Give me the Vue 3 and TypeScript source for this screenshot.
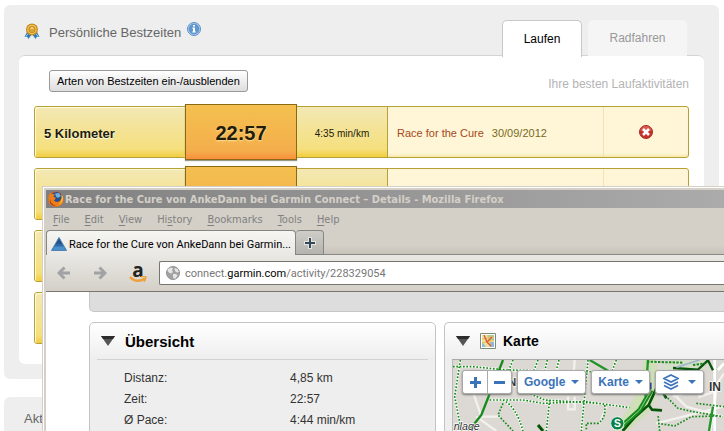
<script setup lang="ts">
interface BestTime {
  name: string
  time: string
  pace: string
  activity: string
  date: string
}

const records: BestTime[] = [
  { name: '5 Kilometer', time: '22:57', pace: '4:35 min/km', activity: 'Race for the Cure', date: '30/09/2012' },
  { name: '', time: '', pace: '', activity: '', date: '' },
  { name: '', time: '', pace: '', activity: '', date: '' },
  { name: '', time: '', pace: '', activity: '', date: '' },
]

const menu: [string, string, string][] = [
  ['', 'F', 'ile'],
  ['', 'E', 'dit'],
  ['', 'V', 'iew'],
  ['Hi', 's', 'tory'],
  ['', 'B', 'ookmarks'],
  ['', 'T', 'ools'],
  ['', 'H', 'elp'],
]

const summary: [string, string][] = [
  ['Distanz:', '4,85 km'],
  ['Zeit:', '22:57'],
  ['Ø Pace:', '4:44 min/km'],
]
</script>

<template>
  <div class="desktop">
    <main class="page">
      <section class="panel">
        <header class="panel-head">
          <svg class="medal" viewBox="0 0 16 17" aria-hidden="true">
            <path d="M3 9L.5 14l2.500-.5L4.500 16 8 11z" fill="#2f7cb8" />
            <path d="M13 9l2.500 5-2.500-.5L11.500 16 8 11z" fill="#2f7cb8" />
            <path d="M2 13l2-2M14 13l-2-2" stroke="#8fc4e6" />
            <circle cx="8" cy="6.500" r="6" fill="#c98b1f" />
            <circle cx="8" cy="6.500" r="4.700" fill="#f0c65a" />
            <circle cx="8" cy="6.500" r="3.200" fill="#dda536" stroke="#b97b18" stroke-width=".7" />
            <path d="M6.500 5.500a2 2 0 0 1 3 0" stroke="#fff1b0" fill="none" />
          </svg>
          <h2>Persönliche Bestzeiten</h2>
          <svg class="info" viewBox="0 0 14 14" aria-hidden="true">
            <circle cx="7" cy="7" r="6.500" fill="#b9d3ec" stroke="#5d8fc4" />
            <circle cx="7" cy="7" r="5.400" fill="#6097cf" />
            <path d="M6 3h2v1.500H6zM5.300 5.500H8v4h.9v1H5.200v-1H6v-3h-.7z" fill="#fff" />
          </svg>
          <nav class="tabs">
            <button class="tab active" type="button">Laufen</button>
            <button class="tab" type="button">Radfahren</button>
          </nav>
        </header>
        <div class="panel-body">
          <div class="tools">
            <button class="toggle" type="button">Arten von Bestzeiten ein-/ausblenden</button>
            <span class="hint">Ihre besten Laufaktivitäten</span>
          </div>
          <ul class="records">
            <li v-for="(r, i) in records" :key="i" class="record">
              <strong class="name">{{ r.name }}</strong>
              <span class="time">{{ r.time }}</span>
              <span class="pace">{{ r.pace }}</span>
              <span class="activity">
                <a v-if="r.activity" href="#">{{ r.activity }}</a>
                <span>{{ r.date }}</span>
              </span>
              <span class="remove">
                <button v-if="r.name" type="button" aria-label="Entfernen">
                  <svg viewBox="0 0 14 14" aria-hidden="true">
                    <circle cx="7" cy="7" r="6.500" fill="#c5312b" stroke="#a82a25" />
                    <path d="M1.500 6a5.500 5 0 0 1 11 0z" fill="#d65a50" />
                    <path d="M4 4l6 6M10 4l-6 6" stroke="#fff" stroke-width="2.600" />
                  </svg>
                </button>
              </span>
            </li>
          </ul>
        </div>
      </section>
      <section class="panel next">
        <h2>Aktivitäten</h2>
      </section>
    </main>

    <div class="window">
      <div class="titlebar">
        <svg viewBox="0 0 16 16" aria-hidden="true">
          <circle cx="8" cy="8" r="7.500" fill="#d9541a" />
          <circle cx="8.500" cy="6.500" r="5.500" fill="#244f8e" />
          <path d="M7 2.500l4-.5 2 3-3 2-2-1.500z" fill="#6eb0e4" />
          <path d="M1 4L2.500 1.500 4 3l3 .5-1.500 2L8 7 6 9.500c1.500 2 5 2 6.500-.5 1-2 1-3.500.5-6 3 3 3.500 7 1 10s-8 3.500-11 1S0 7 1 4z" fill="#ed7d18" />
          <path d="M14 4c2 4 0 9-4 10 3-2 4-5 4-10z" fill="#f8d24a" />
          <path d="M2 8c.5 4 3 6 6 6.500-4 1-7-2-6-6.500z" fill="#b83310" />
        </svg>
        <span>Race for the Cure von AnkeDann bei Garmin Connect – Details - Mozilla Firefox</span>
      </div>
      <nav class="menubar">
        <button v-for="m in menu" :key="m.join('')" type="button">{{ m[0] }}<u>{{ m[1] }}</u>{{ m[2] }}</button>
      </nav>
      <div class="tabstrip">
        <button class="browser-tab" type="button">
          <svg viewBox="0 0 16 14" aria-hidden="true">
            <path d="M8 .5L15.500 13.500H.5z" fill="#2d69a8" stroke="#4f83b8" />
            <path d="M8 1.500L11 7H5z" fill="#235284" />
            <path d="M3.500 9.500h9l2 3.500h-13z" fill="#4b8fca" />
          </svg>
          <span>Race for the Cure von AnkeDann bei Garmin...</span>
        </button>
        <button class="new-tab" type="button" aria-label="Neuer Tab">
          <svg viewBox="0 0 12 12" aria-hidden="true">
            <path d="M6 0v12M0 6h12" stroke="#e4e4e2" stroke-width="4" />
            <path d="M6 1v10M1 6h10" stroke="#344a59" stroke-width="2" />
          </svg>
        </button>
      </div>
      <div class="navbar">
        <button type="button" aria-label="Zurück">
          <svg viewBox="0 0 14 14" aria-hidden="true">
            <path d="M7.500 1.500L2 7l5.500 5.500M2.500 7H13" fill="none" stroke="#a0a2a4" stroke-width="3" />
          </svg>
        </button>
        <button type="button" aria-label="Vor">
          <svg viewBox="0 0 14 14" aria-hidden="true">
            <path d="M6.500 1.500L12 7l-5.500 5.500M11.500 7H1" fill="none" stroke="#a0a2a4" stroke-width="3" />
          </svg>
        </button>
        <button class="amazon" type="button" aria-label="Amazon">
          <b>a</b>
          <svg viewBox="0 0 18 7" aria-hidden="true">
            <path d="M1 1c4 4.500 10 5 15 1.500" fill="none" stroke="#eea13a" stroke-width="2.400" />
            <path d="M12 .8c3-.8 4.500-.5 4.700 0S16.500 4 15 5.500" fill="none" stroke="#eea13a" stroke-width="1.600" />
          </svg>
        </button>
        <div class="address" role="group" aria-label="Adresse">
          <svg viewBox="0 0 14 14" aria-hidden="true">
            <circle cx="7" cy="7" r="6.500" fill="#a2a2a2" stroke="#929292" />
            <path d="M2 3l3-1.500 2 1-1 2 1 1.500-2 1.500L3.500 7 1.500 5zM8.500 2l3 1 1.500 3-2 .5-2-1.500zM7 8l3 0 1.500 1.500-2 3-2 0-.5-2z" fill="#e6e6e6" />
          </svg>
          <a href="#">connect.<b>garmin.com</b>/activity/228329054</a>
        </div>
      </div>

      <div class="content">
        <div class="banner"></div>
        <div class="columns">
          <section class="card">
            <h3>
              <svg class="arrow" viewBox="0 0 14 10" aria-hidden="true">
                <path d="M0 0h14L7 10z" fill="#555" />
                <path d="M0 0h14l-2 3H2z" fill="#2c2c2c" />
              </svg>
              <span class="big">Übersicht</span>
            </h3>
            <table>
              <tbody>
                <tr v-for="s in summary" :key="s[0]">
                  <th scope="row">{{ s[0] }}</th>
                  <td>{{ s[1] }}</td>
                </tr>
              </tbody>
            </table>
          </section>
          <section class="card map-card">
            <h3>
              <svg class="arrow" viewBox="0 0 14 10" aria-hidden="true">
                <path d="M0 0h14L7 10z" fill="#555" />
                <path d="M0 0h14l-2 3H2z" fill="#2c2c2c" />
              </svg>
              <svg class="map-icon" viewBox="0 0 16 16" aria-hidden="true">
                <path d="M.5.5h15v15H.5z" fill="#fff" stroke="#7c8a78" />
                <path d="M2 2h12v12H2z" fill="#e9e29a" />
                <path d="M7 2h7v5H9z" fill="#a8cf9b" />
                <path d="M2 9l4 5H2zM10 9h4v5h-4z" fill="#8fb7df" />
                <path d="M2 6l12-2M2 10l12-3M10 2v12" stroke="#f1b95c" />
                <path d="M4 2l3 7 4 4M7 9l5-5" fill="none" stroke="#dc5a35" stroke-width="1.400" />
              </svg>
              <span>Karte</span>
            </h3>
            <div class="map">
              <svg class="tiles" viewBox="40 150 813 213" preserveAspectRatio="xMinYMin slice" role="img" aria-label="Karte">
                <path d="M40 150h2000v600H40z" fill="#dcd8d3" />
                <path d="M612 150h38l10 60-15 60-20 40-60 53h-40l70-120z" fill="#cfe0b8" />
                <path d="M690 150h110l-5 30-90 20-50-10z" fill="#d5dfc8" />
                <g fill="none" stroke="#f3f1ed" stroke-width="7">
                  <path d="M88 180l10 60 27 80h55M405 150l-5 70M385 260v38h20v-38M500 290l-20 50M680 230l60 60 110 30M853 190l-20 30-20 143M700 260l70-20M650 340l200-50M760 200l20 60 60-20M110 320l60 43" />
                </g>
                <path d="M825 150v213M835 180l18-20" stroke="#fff" stroke-width="8" />
                <g fill="none" stroke="#fff" stroke-width="7">
                  <path d="M62 150L45 260l20 103M40 170h60l100 10 380 8M150 270h100l60 10 130-5 130 18M245 240l70 30 160 10M220 150l-25 60M295 150l-15 40M323 150l-8 35M358 150l-9 35M445 150l-20 213M530 150l-15 40M190 270q40 20 60 93M330 270l-10 93" />
                </g>
                <g fill="none" stroke="#158a18" stroke-width="5" stroke-dasharray="5 5">
                  <path d="M62 150L45 260l20 103M40 170h60l100 10 380 8M150 270h100l60 10 130-5 130 18M245 240l70 30 160 10M220 150l-25 60M295 150l-15 40M323 150l-8 35M358 150l-9 35M445 150l-20 213M530 150l-15 40M190 280l-15 35 45 48M190 270q40 20 60 93M330 270l-10 93M495 285q5 40-20 55h-35v23M670 250l45 45 45 10 90 15M770 280l83 10M655 340l50 8 50-28 80-2M660 363l-5-50" />
                </g>
                <path d="M190 150l-65 165-38 48" fill="none" stroke="#178b1b" stroke-width="7" />
                <path d="M450 150l55 32M625 150l-8 110M820 290l-12 73" fill="none" stroke="#23942a" stroke-width="7" />
                <path d="M700 174l75 5 30-28 15 30" fill="none" stroke="#07540d" stroke-width="7" />
                <path d="M622 155l110 3M760 165l35-5" stroke="#178b1b" stroke-width="6" stroke-dasharray="7 4" />
                <path d="M780 150l-70 22" stroke="#9db6ca" stroke-width="5" />
                <path d="M650 235l-23 50-40 35-38 43M650 240l18 5 12 20M627 285l10 14 30 2" fill="none" stroke="#06550b" stroke-width="8" />
                <path d="M635 240l-35 60-50 45" fill="none" stroke="#178b1b" stroke-width="14" />
                <path d="M635 240l-35 60-50 45" fill="none" stroke="#8fd08c" stroke-width="3" />
                <path d="M295 345l15 18" stroke="#050" stroke-width="9" />
                <path d="M633 218v20" stroke="#1b278c" stroke-width="5" />
                <circle cx="533" cy="340" r="20" fill="#088247" stroke="#e8f4ea" stroke-width="3" />
                <g font-family="Liberation Sans, sans-serif" fill="#333" stroke="#fff" stroke-width="4" paint-order="stroke">
                  <text x="206" y="227" font-size="33" font-weight="bold">N</text>
                  <text x="808" y="244" font-size="36" font-weight="bold">IN</text>
                  <text x="42" y="361" font-size="32" font-style="italic">nlage</text>
                </g>
                <text x="523" y="351" font-family="Liberation Sans, sans-serif" font-size="31" font-weight="bold" fill="#fff">S</text>
              </svg>
              <div class="controls">
                <div class="zoom">
                  <button type="button" aria-label="Vergrößern">
                    <svg viewBox="0 0 11 11"><path d="M5.500 0v11M0 5.500h11" stroke="#3b73b9" stroke-width="3" /></svg>
                  </button>
                  <button type="button" aria-label="Verkleinern">
                    <svg viewBox="0 0 11 11"><path d="M0 5.500h11" stroke="#3b73b9" stroke-width="3" /></svg>
                  </button>
                </div>
                <button class="drop" type="button">Google<i></i></button>
                <button class="drop" type="button">Karte<i></i></button>
                <button class="drop" type="button" aria-label="Ebenen">
                  <svg viewBox="0 0 16 16">
                    <path d="M8 1l7 3.500L8 8 1 4.500zM1 8l7 3.500L15 8M1 11.500L8 15l7-3.500" fill="none" stroke="#3b73b9" stroke-width="1.600" />
                  </svg>
                  <i></i>
                </button>
              </div>
            </div>
          </section>
        </div>
      </div>
    </div>
  </div>
</template>

<style>
body {
  background: #fff;
}
</style>

<style scoped>
* {
  box-sizing: border-box;
}
button {
  margin: 0;
  padding: 0;
  border: 0;
  background: none;
  font: inherit;
  color: inherit;
}
svg {
  display: block;
  flex: none;
}
h2, h3, ul {
  margin: 0;
  padding: 0;
  font-weight: normal;
}
a {
  color: inherit;
  text-decoration: none;
}
.desktop {
  position: relative;
  height: 100vh;
  overflow: hidden;
  font-family: "Liberation Sans", Arial, sans-serif;
  font-size: 12px;
}
.page {
  display: flex;
  flex-direction: column;
  gap: 18px;
  padding: 5px 5px 0 4px;
}
.panel {
  padding: 15px 15px;
  border-radius: 6px;
  background: #eee;
}
.panel-head {
  display: flex;
  align-items: flex-start;
  height: 36px;
  padding-left: 5px;
}
h2 {
  font-size: 13px;
  line-height: 16px;
  color: #666;
}
.panel-head h2 {
  margin: 5px 6px 0 9px;
}
.medal {
  width: 16px;
  height: 17px;
  margin-top: 3px;
}
.info {
  width: 14px;
  height: 14px;
  margin-top: 2px;
}
.tabs {
  display: flex;
  gap: 6px;
  margin-left: auto;
  padding-right: 17px;
}
.tab {
  height: 36px;
  width: 99px;
  border-radius: 5px 5px 0 0;
  background: #f5f5f5;
  color: #999;
}
.tab.active {
  height: 37px;
  width: 80px;
  border: 1px solid #c8c8c8;
  border-bottom: 0;
  background: #fff;
  color: #000;
  z-index: 1;
}
.panel-body {
  margin-top: -1px;
  padding: 14px 15px 20px;
  border-top: 1px solid #d4d4d4;
  border-radius: 6px;
  background: #fff;
}
.tools {
  display: flex;
  justify-content: space-between;
  align-items: flex-start;
  padding-left: 15px;
}
.toggle {
  height: 22px;
  padding: 0 7px;
  border: 1px solid #999;
  border-radius: 3px;
  background: linear-gradient(#fff, #ddd);
  font-size: 11px;
}
.hint {
  padding-top: 6px;
  line-height: 16px;
  color: #b4b4b4;
}
.records {
  display: grid;
  gap: 10px;
  margin-top: 14px;
  list-style: none;
}
.record {
  display: grid;
  grid-template-columns: 150px 112px 91px 1fr 84px;
  height: 52px;
  border: 1px solid #b7a136;
  border-radius: 3px;
  background: #fff6d8;
  box-shadow: inset 0 -3px 3px -1px #f7e7a8;
}
.record > * {
  display: flex;
  align-items: center;
}
.name, .pace {
  background: linear-gradient(#f3e8b4, #f5df7c 85%, #f2cd3e);
  color: #221c08;
}
.name {
  padding: 2px 0 0 9px;
  box-shadow: inset 1px 1px 0 #fffbd8;
  text-shadow: 0 1px 1px #fff;
  border-radius: 3px;
  font-size: 13px;
}
.time {
  justify-content: center;
  margin: -3px 0;
  padding-top: 2px;
  border: 1px solid #8b6914;
  background: linear-gradient(#f4c04f, #f4ae4c 85%, #f98f3c);
  box-shadow: 0 1px 1px #998;
  font-size: 20px;
  font-weight: bold;
  color: #221c08;
  text-shadow: 0 1px 2px #fde0a0;
}
.pace {
  justify-content: center;
  padding-top: 2px;
  border-right: 1px solid #b7a136;
  font-size: 10px;
}
.activity {
  gap: 8px;
  padding: 2px 0 0 9px;
  border-right: 1px solid #f2e3b4;
  font-size: 11px;
  color: #776a1c;
}
.activity a {
  color: #a4481b;
}
.remove {
  justify-content: center;
}
.remove svg {
  width: 14px;
  height: 14px;
}
.next {
  padding: 14px 20px 40px;
}
.window {
  position: absolute;
  top: 186px;
  right: 0;
  bottom: 0;
  left: 42px;
  display: flex;
  flex-direction: column;
  padding: 3px 0 0 3px;
  border: solid #d4d0c8;
  border-width: 1px 0 0 1px;
  background: #d4d0c8;
  box-shadow: inset 1px 1px 0 #fff;
  font-family: "DejaVu Sans Condensed", "DejaVu Sans", sans-serif;
  font-size: 11px;
}
.titlebar {
  display: flex;
  flex: none;
  align-items: center;
  gap: 1px;
  height: 18px;
  padding-left: 2px;
  background: linear-gradient(90deg, #808080, #ababab);
  color: #d4d0c8;
  font-weight: bold;
  white-space: nowrap;
}
.titlebar svg {
  width: 16px;
  height: 16px;
}
.menubar {
  display: flex;
  flex: none;
  gap: 15px;
  height: 22px;
  padding-left: 7px;
  color: #808080;
}
.menubar u {
  text-underline-offset: 2px;
}
.tabstrip {
  display: flex;
  flex: none;
  height: 25px;
  background: linear-gradient(#d4d0c8 60%, #c6c2ba);
  box-shadow: inset 0 -1px 0 #8a8884;
}
.browser-tab {
  display: flex;
  align-items: center;
  gap: 2px;
  width: 250px;
  padding: 2px 4px 0;
  border: 1px solid #858582;
  border-bottom: 0;
  border-radius: 4px 4px 0 0;
  background: linear-gradient(#f5f5f2, #e9e8e4);
  color: #000;
  font-family: Roboto, sans-serif;
  white-space: nowrap;
}
.browser-tab svg {
  width: 16px;
  height: 14px;
}
.new-tab {
  display: grid;
  place-items: center;
  width: 28px;
  border: 1px solid #858582;
  border-left: 0;
  border-radius: 4px 4px 0 0;
  background: linear-gradient(#cfcdc7, #b5b3ae);
}
.new-tab svg {
  width: 12px;
  height: 12px;
}
.navbar {
  display: flex;
  flex: none;
  align-items: center;
  height: 37px;
  padding-left: 11px;
  border-bottom: 1px solid #777570;
  background: linear-gradient(#e9e8e4, #d4d0c8);
}
.navbar > button {
  width: 36px;
}
.navbar > button svg {
  width: 14px;
  height: 14px;
}
.navbar > .amazon {
  display: flex;
  flex-direction: column;
  align-items: center;
  width: 18px;
  margin-right: 12px;
  font-family: "Open Sans", sans-serif;
  font-size: 19px;
  line-height: 12px;
  color: #222;
}
.navbar > .amazon svg {
  width: 18px;
  height: 7px;
}
.address {
  display: flex;
  flex: 1;
  align-items: center;
  gap: 5px;
  height: 24px;
  padding-left: 6px;
  border: 1px solid #777570;
  border-right: 0;
  border-radius: 2px 0 0 2px;
  background: #fff;
  color: #777;
  font-family: Roboto, sans-serif;
}
.address svg {
  width: 14px;
  height: 14px;
}
.address b {
  font-weight: normal;
  color: #000;
}
.content {
  flex: 1;
  min-height: 0;
  overflow: hidden;
  padding-left: 43px;
  background: #fff;
  font-family: "Liberation Sans", Arial, sans-serif;
}
.banner {
  height: 20px;
  border: solid #c6c6c6;
  border-width: 0 0 1px 1px;
  border-radius: 0 0 0 5px;
  background: #ddd;
}
.columns {
  display: grid;
  grid-template-columns: 347px 1fr;
  gap: 8px;
  margin-top: 10px;
}
.card {
  height: 140px;
  padding: 0 7px;
  border: 1px solid #c4c4c4;
  border-radius: 5px;
  background: linear-gradient(#fff, #eee 37px);
}
.map-card {
  padding-right: 0;
  border-right: 0;
  border-radius: 5px 0 0 0;
}
h3 {
  display: flex;
  align-items: center;
  height: 37px;
  padding-left: 4px;
  border-bottom: 1px solid #d2d2d2;
  font-size: 14px;
  font-weight: bold;
}
.big {
  font-size: 15px;
}
.arrow {
  width: 14px;
  height: 10px;
  margin-right: 10px;
}
.map-icon {
  width: 16px;
  height: 16px;
  margin-right: 7px;
}
table {
  width: 100%;
  margin-top: 8px;
  border-collapse: collapse;
  font-size: 12px;
  line-height: 21px;
  color: #333;
}
th, td {
  padding: 0;
  text-align: left;
  font-weight: normal;
}
th {
  width: 193px;
  padding-left: 27px;
}
.map {
  display: grid;
  overflow: hidden;
  height: 110px;
  border-left: 1px solid #bbb;
}
.map-card h3 {
  border-bottom-color: #aaa;
}
.map > * {
  grid-area: 1 / 1;
}
.tiles {
  width: 100%;
  height: 71px;
}
.controls {
  z-index: 1;
  display: flex;
  align-items: flex-start;
  gap: 5px;
  padding: 10px 0 0 9px;
  color: #3b73b9;
  font-size: 12px;
  font-weight: bold;
}
.zoom, .drop {
  display: flex;
  align-items: center;
  height: 24px;
  border: 1px solid #aaa;
  border-radius: 3px;
  background: #fff;
  box-shadow: 0 1px 2px #777;
}
.zoom button {
  display: grid;
  place-items: center;
  width: 24px;
  height: 22px;
}
.zoom button + button {
  border-left: 1px solid #aaa;
}
.zoom svg {
  width: 11px;
  height: 11px;
}
.drop {
  gap: 6px;
  padding: 0 6px;
}
.drop svg {
  width: 16px;
  height: 16px;
}
.drop:last-child {
  gap: 9px;
  padding: 0 7px;
}
.drop i {
  border: 4px solid transparent;
  border-top-color: #3b73b9;
  border-bottom: 0;
}
</style>
